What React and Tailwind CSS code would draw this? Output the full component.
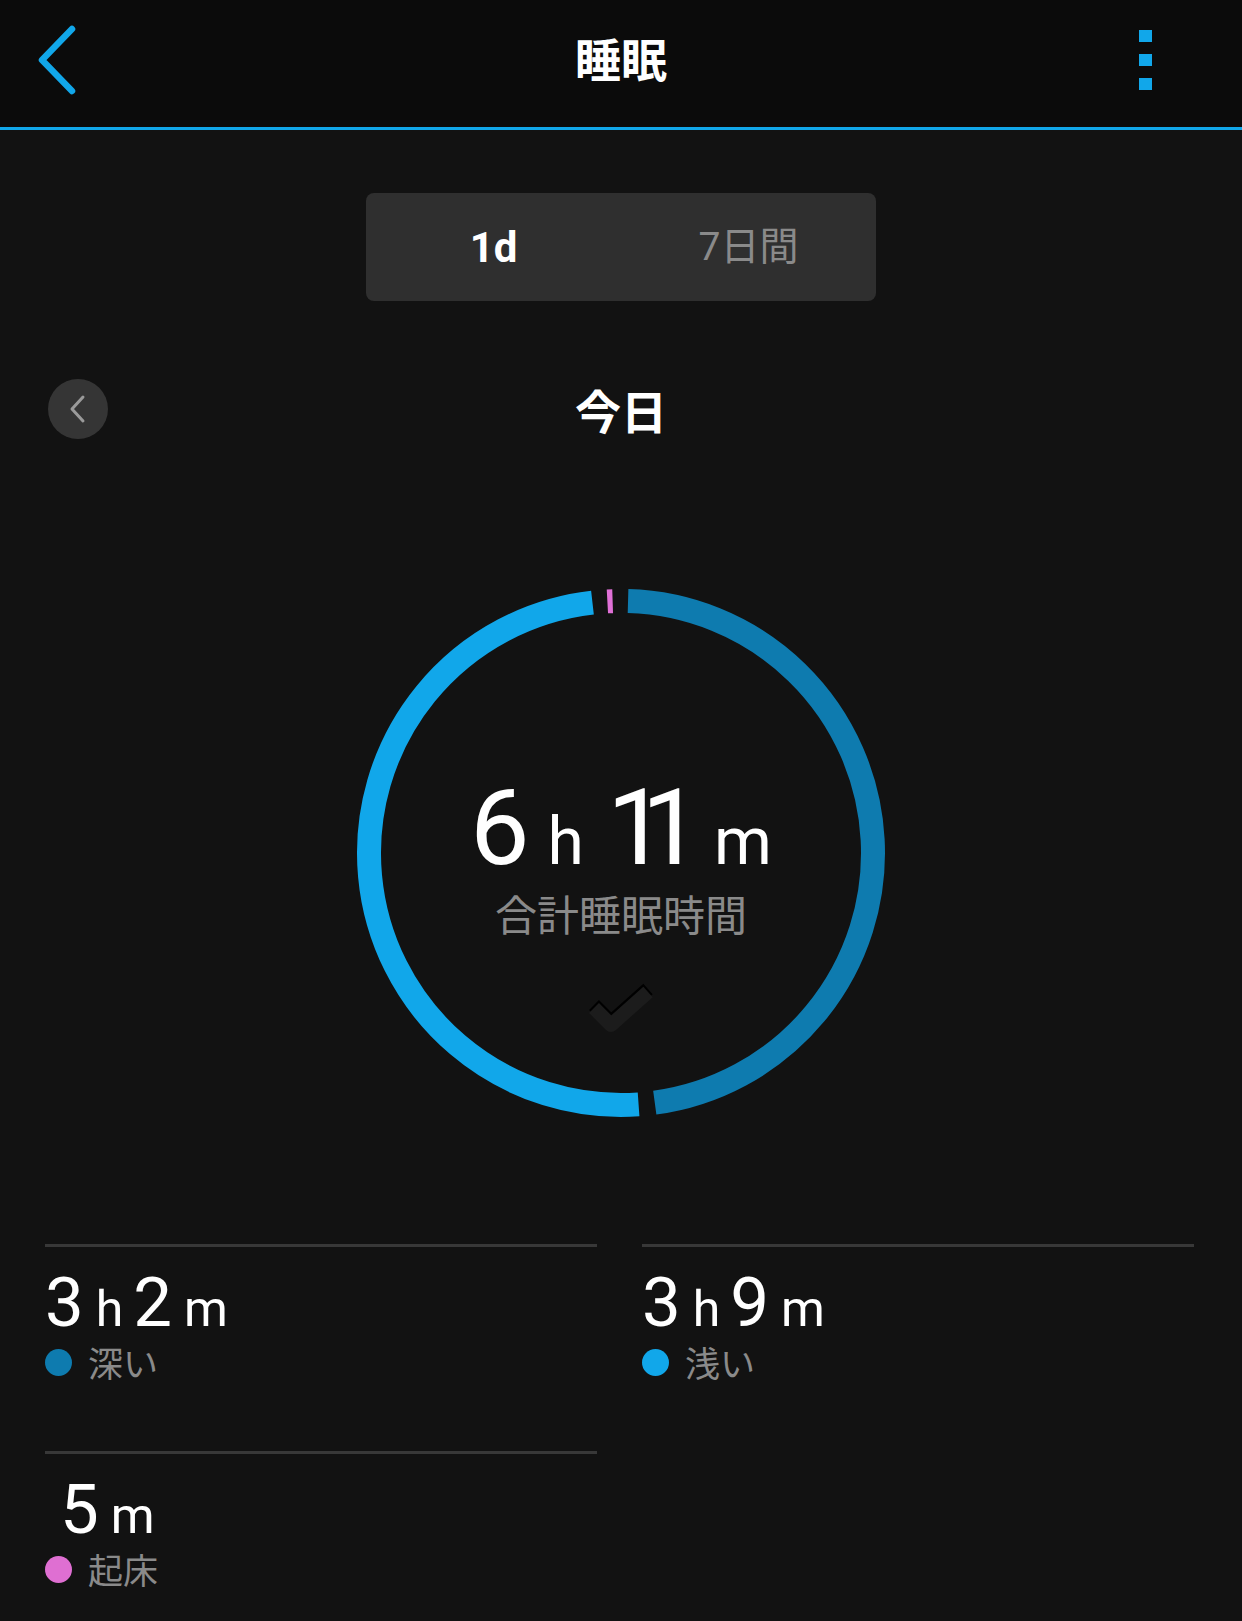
import React from "react";

const arc = (a1, a2) => {
  const r = 252;
  const c = 270;
  const pt = (a) => {
    const t = (a * Math.PI) / 180;
    return [c + r * Math.sin(t), c - r * Math.cos(t)];
  };
  const [x1, y1] = pt(a1);
  const [x2, y2] = pt(a2);
  const large = a2 - a1 > 180 ? 1 : 0;
  return `M ${x1} ${y1} A ${r} ${r} 0 ${large} 1 ${x2} ${y2}`;
};

const Stat = ({ parts, label, color, indent }) => (
  <div className="flex flex-col">
    <div className="h-[3px] bg-[#383838]" />
    <div className={`mt-[21px] flex items-baseline text-white leading-none ${indent ? "pl-[15px]" : ""}`}>
      {parts.map((p, i) => (
        <span
          key={i}
          className={
            p.unit
              ? "text-[50px] ml-[12px] mr-[10px]"
              : "text-[69px]"
          }
        >
          {p.v}
        </span>
      ))}
    </div>
    <div className="mt-[8px] flex items-center h-[35px]">
      <span className={`w-[27px] h-[27px] rounded-full ${color}`} />
      <span className="ml-[16px] text-[35px] leading-none text-[#8a8a8a] translate-y-[3px]">{label}</span>
    </div>
  </div>
);

const App = () => {
  return (
    <div className="min-h-[1621px] w-full bg-[#121212] font-['Roboto','Noto_Sans_CJK_JP',sans-serif]">
      {/* header */}
      <div className="h-[130px] bg-[#0b0b0b] border-b-[3px] border-[#11a7ea] flex items-center pb-[7px]">
        <div className="w-[200px] pl-[36px] flex items-center">
          <svg width="44" height="70" viewBox="0 0 44 70">
            <polyline
              points="36,4 6,35 36,66"
              fill="none"
              stroke="#11a7ea"
              strokeWidth="6.5"
              strokeLinecap="round"
              strokeLinejoin="round"
            />
          </svg>
        </div>
        <div className="flex-1 text-center text-white text-[46px] font-bold leading-none -mt-[6px] font-['Noto_Sans_CJK_JP',sans-serif]">
          睡眠
        </div>
        <div className="w-[200px] flex justify-end pr-[90px]">
          <div className="flex flex-col gap-[12px]">
            <span className="w-[13px] h-[12px] bg-[#11a7ea]" />
            <span className="w-[13px] h-[12px] bg-[#11a7ea]" />
            <span className="w-[13px] h-[12px] bg-[#11a7ea]" />
          </div>
        </div>
      </div>

      {/* tabs */}
      <div className="flex justify-center mt-[63px]">
        <div className="w-[510px] h-[108px] rounded-[8px] bg-[#2f2f2f] grid grid-cols-2">
          <div className="flex items-center justify-center text-white text-[42px] font-bold">1d</div>
          <div className="flex items-center justify-center text-[#8a8a8a] text-[39px]">7日間</div>
        </div>
      </div>

      {/* date row */}
      <div className="relative mt-[78px] h-[60px] flex items-center justify-center">
        <div className="absolute left-[48px] top-0 w-[60px] h-[60px] rounded-full bg-[#353535] flex items-center justify-center">
          <svg width="20" height="30" viewBox="0 0 20 30">
            <polyline
              points="15,3 4,15 15,27"
              fill="none"
              stroke="#9a9a9a"
              strokeWidth="3"
              strokeLinecap="round"
              strokeLinejoin="round"
            />
          </svg>
        </div>
        <div className="text-white text-[46px] font-bold leading-none font-['Noto_Sans_CJK_JP',sans-serif]">
          今日
        </div>
      </div>

      {/* ring */}
      <div className="flex justify-center mt-[144px]">
        <div className="relative w-[540px] h-[540px]">
          <svg className="absolute inset-0" width="540" height="540" viewBox="0 0 540 540">
            <path d={arc(1.6, 172.3)} fill="none" stroke="#0e7baf" strokeWidth="24" />
            <path d={arc(176, 353.5)} fill="none" stroke="#11a7ea" strokeWidth="24" />
            <path d={arc(356.9, 358.1)} fill="none" stroke="#e070d6" strokeWidth="24" />
          </svg>
          <div className="absolute inset-0 flex flex-col items-center pt-[192px]">
            <div className="flex items-baseline text-white leading-none">
              <span className="text-[106px]">6</span>
              <span className="text-[66px] ml-[18px] mr-[23px]">h</span>
              <span className="text-[106px] tracking-[-25px]">11</span>
              <span className="text-[66px] ml-[38px]">m</span>
            </div>
            <div className="mt-[15px] text-[42px] leading-none text-[#8a8a8a]">合計睡眠時間</div>
            <svg className="mt-[43px]" width="70" height="56" viewBox="0 0 70 56">
              <polyline
                points="8,24 25,41 62,8"
                fill="none"
                stroke="#000"
                strokeWidth="14"
                strokeLinejoin="round"
              />
              <polyline
                points="8,27 25,44 62,11"
                fill="none"
                stroke="#1c1c1c"
                strokeWidth="14"
                strokeLinejoin="round"
              />
            </svg>
          </div>
        </div>
      </div>

      {/* stats */}
      <div className="mt-[121px] grid grid-cols-2 gap-x-[45px] gap-y-[71px] pl-[45px] pr-[48px]">
        <Stat
          parts={[{ v: "3" }, { v: "h", unit: true }, { v: "2" }, { v: "m", unit: true }]}
          label="深い"
          color="bg-[#0e7baf]"
        />
        <Stat
          parts={[{ v: "3" }, { v: "h", unit: true }, { v: "9" }, { v: "m", unit: true }]}
          label="浅い"
          color="bg-[#11a7ea]"
        />
        <Stat parts={[{ v: "5" }, { v: "m", unit: true }]} label="起床" color="bg-[#df6fd2]" indent />
      </div>
    </div>
  );
};

export default App;
